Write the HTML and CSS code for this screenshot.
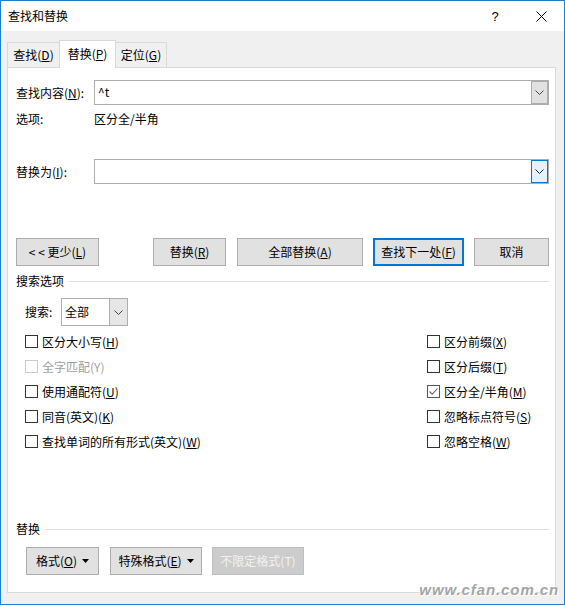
FILE: index.html
```html
<!DOCTYPE html>
<html lang="zh-CN">
<head>
<meta charset="utf-8">
<title>查找和替换</title>
<link rel="stylesheet" href="styles.css">
</head>
<body>
<div class="window">
  <div class="titlebar">
    <span class="title">查找和替换</span>
    <span class="cap-btn help">?</span>
    <span class="cap-btn close"><svg width="11" height="11" viewBox="0 0 11 11"><path d="M0.5 0.5 L10.5 10.5 M10.5 0.5 L0.5 10.5" stroke="#000" stroke-width="1" fill="none"/></svg></span>
  </div>
  <div class="tabs">
    <div class="tab">查找(<u>D</u>)</div>
    <div class="tab active">替换(<u>P</u>)</div>
    <div class="tab last">定位(<u>G</u>)</div>
  </div>
  <div class="panel">
    <div class="field-row first">
      <span class="field-label">查找内容(<u>N</u>):</span>
      <div class="combo">
        <span class="combo-text">^t</span>
        <span class="combo-btn"><svg width="9" height="5" viewBox="0 0 9 5"><path d="M0.5 0.5 L4.5 4.5 L8.5 0.5" stroke="#444" fill="none"/></svg></span>
      </div>
    </div>
    <div class="options-row">
      <span class="field-label">选项:</span>
      <span>区分全/半角</span>
    </div>
    <div class="field-row second">
      <span class="field-label">替换为(<u>I</u>):</span>
      <div class="combo">
        <span class="combo-text"></span>
        <span class="combo-btn focus"><svg width="9" height="5" viewBox="0 0 9 5"><path d="M0.5 0.5 L4.5 4.5 L8.5 0.5" stroke="#222" fill="none"/></svg></span>
      </div>
    </div>
    <div class="btn-row">
      <div class="btn b-less">&lt; &lt; 更少(<u>L</u>)</div>
      <div class="btn b-rep">替换(<u>R</u>)</div>
      <div class="btn b-all">全部替换(<u>A</u>)</div>
      <div class="btn b-next default">查找下一处(<u>F</u>)</div>
      <div class="btn b-cancel">取消</div>
    </div>
    <div class="section s1"><span>搜索选项</span><i class="rule"></i></div>
    <div class="search-row">
      <span class="search-label">搜索:</span>
      <div class="select">
        <span class="select-text">全部</span>
        <span class="select-btn"><svg width="9" height="5" viewBox="0 0 9 5"><path d="M0.5 0.5 L4.5 4.5 L8.5 0.5" stroke="#444" fill="none"/></svg></span>
      </div>
    </div>
    <div class="checks">
      <div class="chk"><span class="box"></span>区分大小写(<u>H</u>)</div>
      <div class="chk"><span class="box"></span>区分前缀(<u>X</u>)</div>
      <div class="chk disabled"><span class="box"></span>全字匹配(Y)</div>
      <div class="chk"><span class="box"></span>区分后缀(<u>T</u>)</div>
      <div class="chk"><span class="box"></span>使用通配符(<u>U</u>)</div>
      <div class="chk"><span class="box checked"><svg width="11" height="11" viewBox="0 0 11 11"><path d="M1.5 5.5 L4.2 8.2 L9.5 2.5" stroke="#666" stroke-width="1.1" fill="none"/></svg></span>区分全/半角(<u>M</u>)</div>
      <div class="chk"><span class="box"></span>同音(英文)(<u>K</u>)</div>
      <div class="chk"><span class="box"></span>忽略标点符号(<u>S</u>)</div>
      <div class="chk"><span class="box"></span>查找单词的所有形式(英文)(<u>W</u>)</div>
      <div class="chk"><span class="box"></span>忽略空格(<u>W</u>)</div>
    </div>
    <div class="section s2"><span>替换</span><i class="rule"></i></div>
    <div class="bottom-btns">
      <div class="btn b-fmt">格式(<u>O</u>)<svg class="tri" width="7" height="4" viewBox="0 0 7 4"><path d="M0 0 L7 0 L3.5 4 Z" fill="#000"/></svg></div>
      <div class="btn b-special">特殊格式(<u>E</u>)<svg class="tri" width="7" height="4" viewBox="0 0 7 4"><path d="M0 0 L7 0 L3.5 4 Z" fill="#000"/></svg></div>
      <div class="btn b-nofmt disabled">不限定格式(T)</div>
    </div>
  </div>
  <div class="watermark">www.cfan.com.cn</div>
</div>
</body>
</html>
```

FILE: styles.css
```css
html, body {
  margin: 0;
  padding: 0;
  background: #f0f0f0;
}
body {
  font-family: "Noto Sans CJK SC", "Noto Sans", sans-serif;
  font-size: 12px;
  color: #000;
}
u {
  text-decoration: underline;
  text-underline-offset: 1px;
}
.window {
  position: relative;
  width: 565px;
  height: 605px;
  box-sizing: border-box;
  border: 1px solid #1a7fd4;
  background: #f0f0f0;
  overflow: hidden;
}
.titlebar {
  height: 30px;
  background: #fff;
  display: flex;
  align-items: center;
}
.title {
  padding-left: 7px;
  font-size: 12px;
  line-height: 30px;
  flex: 1;
}
.cap-btn {
  width: 46px;
  height: 30px;
  display: flex;
  align-items: center;
  justify-content: center;
}
.help {
  font-family: "Liberation Sans", sans-serif;
  font-size: 13px;
}
.tabs {
  display: flex;
  align-items: flex-end;
  height: 27px;
  margin-top: 9px;
  padding-left: 6px;
}
.tab {
  height: 25px;
  box-sizing: border-box;
  width: 53px;
  border: 1px solid #d9d9d9;
  border-bottom: none;
  background: #f0f0f0;
  display: flex;
  align-items: center;
  justify-content: center;
  line-height: 16px;
}
.tab.active {
  width: 57px;
  height: 28px;
  margin-left: -1px;
  margin-bottom: -1px;
  background: #fff;
  position: relative;
  z-index: 1;
  padding-bottom: 2px;
}
.tab.last {
  width: 52px;
  margin-left: -1px;
}
.panel {
  margin-left: 6px;
  width: 549px;
  box-sizing: border-box;
  border: 1px solid #d9d9d9;
  background: #fff;
  padding: 0 6px 17px 8px;
}
.field-row {
  display: flex;
  align-items: center;
  height: 25px;
}
.field-row.first { margin-top: 12px; }
.field-row.second { margin-top: 31px; }
.field-label {
  width: 78px;
  flex: none;
  line-height: 18px;
}
.combo {
  flex: 1;
  height: 25px;
  box-sizing: border-box;
  border: 1px solid #adadad;
  display: flex;
  background: #fff;
}
.combo-text {
  flex: 1;
  padding-left: 3px;
  line-height: 22px;
}
.combo-btn {
  width: 17px;
  box-sizing: border-box;
  border: 1px solid #adadad;
  background: #e1e1e1;
  display: flex;
  align-items: center;
  justify-content: center;
}
.combo-btn.focus {
  border-color: #0078d7;
  background: #e5f1fb;
}
.options-row {
  display: flex;
  margin-top: 5px;
  height: 18px;
  line-height: 18px;
}
.btn-row {
  display: flex;
  margin-top: 54px;
  height: 28px;
}
.btn {
  height: 28px;
  box-sizing: border-box;
  border: 1px solid #adadad;
  background: #e1e1e1;
  display: flex;
  align-items: center;
  justify-content: center;
  line-height: 16px;
  white-space: pre;
}
.btn.default {
  border: 2px solid #0078d7;
}
.b-less { width: 83px; }
.b-rep { width: 73px; margin-left: 54px; }
.b-all { width: 126px; margin-left: 11px; }
.b-next { width: 91px; margin-left: 10px; }
.b-cancel { width: 75px; margin-left: 10px; }
.section {
  display: flex;
  align-items: center;
  height: 18px;
  line-height: 18px;
}
.section.s1 { margin-top: 6px; }
.section.s2 { margin-top: 66px; }
.rule {
  flex: 1;
  height: 1px;
  background: #dcdcdc;
  margin-left: 5px;
}
.search-row {
  display: flex;
  align-items: center;
  margin-top: 8px;
  height: 28px;
  padding-left: 9px;
}
.search-label {
  width: 36px;
  line-height: 18px;
}
.select {
  width: 67px;
  height: 28px;
  box-sizing: border-box;
  border: 1px solid #adadad;
  display: flex;
  background: #fff;
}
.select-text {
  flex: 1;
  padding-left: 3px;
  line-height: 25px;
}
.select-btn {
  width: 17px;
  border-left: 1px solid #adadad;
  background: #e6e6e6;
  display: flex;
  align-items: center;
  justify-content: center;
}
.checks {
  margin-top: 3px;
  padding-left: 9px;
  display: grid;
  grid-template-columns: 1fr 122px;
  grid-auto-rows: 25px;
}
.chk {
  display: flex;
  align-items: center;
  line-height: 18px;
  white-space: nowrap;
}
.box {
  width: 13px;
  height: 13px;
  box-sizing: border-box;
  border: 1px solid #333;
  background: #fff;
  margin-right: 4px;
  display: flex;
  align-items: center;
  justify-content: center;
  flex: none;
}
.box.checked {
  border-color: #555;
}
.chk.disabled {
  color: #a0a0a0;
}
.chk.disabled .box {
  border-color: #cccccc;
}
.bottom-btns {
  display: flex;
  margin-top: 9px;
  padding-left: 10px;
}
.tri {
  margin-left: 5px;
}
.b-fmt { width: 73px; }
.b-special { width: 92px; margin-left: 11px; }
.b-nofmt { width: 92px; margin-left: 10px; }
.btn.disabled {
  background: #cccccc;
  border-color: #bfbfbf;
  color: #f2f2f2;
}
.watermark {
  position: absolute;
  right: 5px;
  bottom: 7px;
  font-family: "Liberation Sans", sans-serif;
  font-weight: bold;
  font-style: italic;
  font-size: 15px;
  letter-spacing: 0.9px;
  color: #a5a5a5;
  text-shadow: 0 0 1px #fff, 1px 1px 0 #fff, -1px -1px 0 #fff;
  line-height: 14px;
}
```
